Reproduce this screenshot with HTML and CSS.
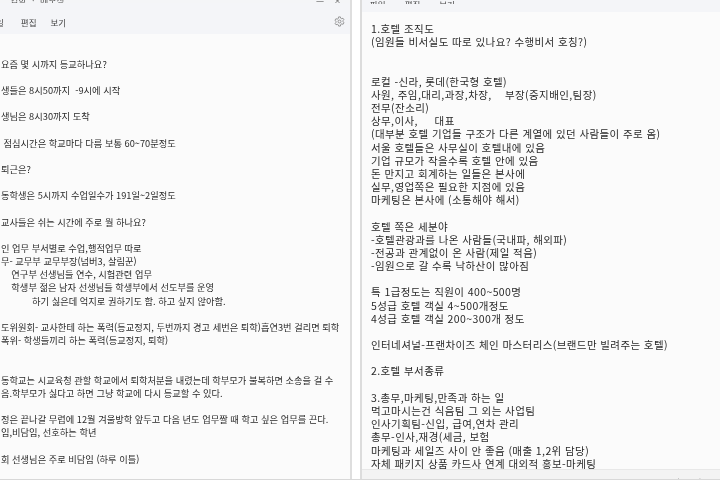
FILE: index.html
```html
<!DOCTYPE html>
<html lang="ko">
<head>
<meta charset="utf-8">
<title>메모장</title>
<link rel="stylesheet" href="styles.css">
</head>
<body>
<div class="desk">
  <section class="win win-left">
    <div class="title-strip"><span class="clip-title">입학 ㆍ 메모장</span><span class="win-btns">—&#8195;×</span></div>
    <div class="menu menu-left">
      <span class="m0">일</span><span class="m1">편집</span><span class="m2">보기</span>
      <svg class="gear" viewBox="0 0 12 12" aria-hidden="true"><path d="M5 1h2l.3 1.4 1.2.6 1.3-.6 1 1.7-1 1 .1 1.3 1 1-1 1.7-1.3-.6-1.2.6L7 11H5l-.3-1.4-1.2-.6-1.3.6-1-1.7 1-1-.1-1.3-1-1 1-1.7 1.3.6 1.2-.6z"/><circle cx="6" cy="6" r="1.6"/></svg>
    </div>
    <pre class="text text-left">요즘 몇 시까지 등교하나요?

생들은 8시50까지  -9시에 시작

생님은 8시30까지 도착

 점심시간은 학교마다 다름 보통 60~70분정도

퇴근은?

동학생은 5시까지 수업일수가 191일~2일정도

교사들은 쉬는 시간에 주로 뭘 하나요?

인 업무 부서별로 수업,행적업무 따로
무- 교무부 교무부장(넘버3, 살림꾼)
    연구부 선생님들 연수, 시험관련 업무
    학생부 젊은 남자 선생님들 학생부에서 선도부를 운영
            하기 싫은데 억지로 권하기도 함. 하고 싶지 않아함.

도위원회- 교사한테 하는 폭력(등교정지, 두번까지 경고 세번은 퇴학)흡연3번 걸리면 퇴학
폭위- 학생들끼리 하는 폭력(등교정지, 퇴학)


동학교는 시교육청 관할 학교에서 퇴학처분을 내렸는데 학부모가 불복하면 소송을 걸 수
음.학부모가 싫다고 하면 그냥 학교에 다시 등교할 수 있다.

정은 끝나갈 무렵에 12월 겨울방학 앞두고 다음 년도 업무짤 때 학고 싶은 업무를 끈다.
임,비담임, 선호하는 학년

회 선생님은 주로 비담임 (하루 이틀)</pre>
  </section>
  <section class="win win-right">
    <div class="menu menu-right"><span class="r0">파일</span><span class="r1">편집</span><span class="r2">보기</span></div>
    <pre class="text text-right">1.호텔 조직도
(임원들 비서실도 따로 있나요? 수행비서 호칭?)


로컬 -신라, 롯데(한국형 호텔)
사원, 주임,대리,과장,차장,    부장(중지배인,팀장)
전무(잔소리)
상무,이사,     대표
(대부분 호텔 기업들 구조가 다른 계열에 있던 사람들이 주로 옴)
서울 호텔들은 사무실이 호텔내에 있음
기업 규모가 작을수록 호텔 안에 있음
돈 만지고 회계하는 일들은 본사에
실무,영업쪽은 필요한 지점에 있음
마케팅은 본사에 (소통해야 해서)

호텔 쪽은 세분야
-호텔관광과를 나온 사람들(국내파, 해외파)
-전공과 관계없이 온 사람(제일 적음)
-임원으로 갈 수록 낙하산이 많아짐

특 1급정도는 직원이 400~500명
5성급 호텔 객실 4~500개정도
4성급 호텔 객실 200~300개 정도

인터네셔널-프랜차이즈 체인 마스터리스(브랜드만 빌려주는 호텔)

2.호텔 부서종류

3.총무,마케팅,만족과 하는 일
먹고마시는건 식음팀 그 외는 사업팀
인사기획팀-신입, 급여,연차 관리
총무-인사,재경(세금, 보험
마케팅과 세일즈 사이 안 좋음 (매출 1,2위 담당)
자체 패키지 상품 카드사 연계 대외적 홍보-마케팅</pre>
    <div class="status"><span>줄 1, 열 1</span><span class="s1">100%</span><span class="s2">Windows (CRLF)</span></div>
  </section>
</div>
</body>
</html>
```
FILE: styles.css
```css
html, body {
  margin: 0;
  height: 100%;
  background: #fff;
}
.desk {
  width: 720px;
  height: 480px;
  display: flex;
  overflow: hidden;
  background: #fff;
  box-sizing: border-box;
  border-bottom: 1px solid #d8d8d8;
  font-family: "Noto Sans CJK KR", "Noto Sans", sans-serif;
  color: #2a2a2a;
}
.win {
  display: flex;
  flex-direction: column;
  overflow: hidden;
  background: #fbfbfb;
}
.win-left {
  width: 352px;
  border-right: 2px solid #dedede;
  box-sizing: border-box;
}
.win-right {
  width: 360px;
  margin-left: 8px;
  border-left: 2px solid #dcdcdc;
  box-sizing: border-box;
}
.title-strip {
  height: 3px;
  flex: none;
  overflow: hidden;
  position: relative;
  background: #f4f5f7;
  font-size: 9px;
  line-height: 1px;
  filter: blur(.5px);
  color: #555;
}
.clip-title { margin-left: 10px; }
.win-btns { position: absolute; right: 8px; top: 0; }
.menu {
  flex: none;
  display: flex;
  align-items: center;
  background: #f4f5f8;
  font-size: 8.5px;
  color: #444;
}
.menu-left {
  height: 31px;
  box-sizing: border-box;
  padding-top: 6px;
  position: relative;
}
.menu-left span { filter: blur(.4px); }
.m0 { margin-left: -4px; }
.m1 { margin-left: 17px; }
.m2 { margin-left: 14px; }
.gear {
  position: absolute;
  left: 334px;
  top: 13px;
  width: 11px;
  height: 11px;
  fill: none;
  stroke: #777;
  stroke-width: .8;
  filter: blur(.25px);
}
.menu-right {
  height: 12px;
  align-items: flex-end;
  padding-left: 8px;
  line-height: 8px;
}
.menu-right span { filter: blur(.4px); margin-bottom: 8px; height: 4px; overflow: hidden; }
.r1 { margin-left: 19px; }
.r2 { margin-left: 19px; }
.text {
  flex: 1;
  margin: 0;
  overflow: hidden;
  white-space: pre;
  font-family: inherit;
  filter: blur(.4px);
}
.text-left {
  padding: 23.5px 0 0 1px;
  font-size: 9.25px;
  line-height: 13.17px;
}
.text-right {
  padding: 10px 0 0 9px;
  font-size: 10.5px;
  line-height: 13.17px;
  letter-spacing: .4px;
}
.status {
  flex: none;
  height: 9px;
  display: flex;
  background: #f3f3f3;
  border-top: 1px solid #e8e8e8;
  font-size: 8.5px;
  line-height: 24px;
  padding-left: 14px;
  overflow: hidden;
  color: #555;
  filter: blur(.4px);
}
.s1 { margin-left: 175px; }
.s2 { margin-left: 30px; }
```
